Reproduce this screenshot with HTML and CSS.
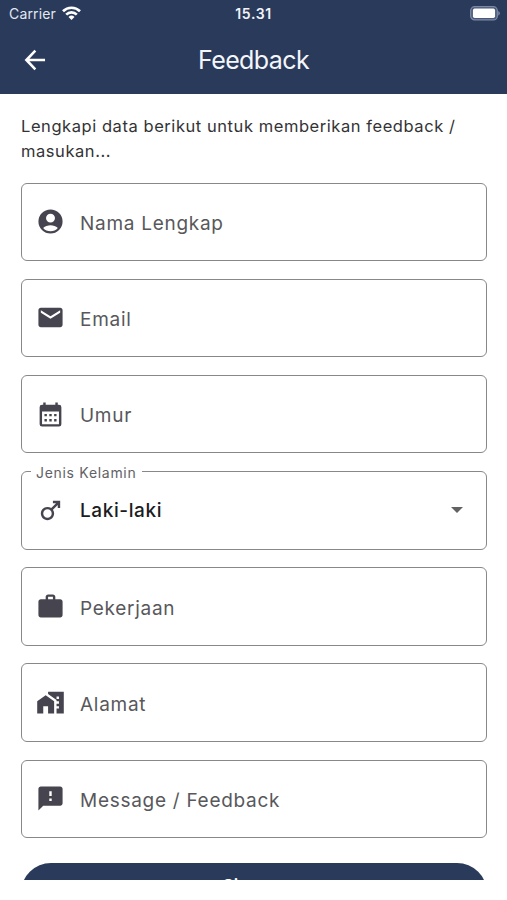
FILE: index.html
```html
<!DOCTYPE html>
<html lang="id">
<head>
<meta charset="utf-8">
<meta name="viewport" content="width=device-width, initial-scale=1">
<title>Feedback</title>
<link rel="stylesheet" href="styles.css">
</head>
<body>
<div class="app">
  <header class="header">
    <div class="status">
      <div class="status-left"><span class="carrier">Carrier</span>
        <svg class="wifi" viewBox="0 0 19 14"><g fill="none" stroke="#fff" stroke-width="2.7"><path d="M1 5.200a12.200 12.200 0 0 1 17 0"/><path d="M4.200 8.600a7.600 7.600 0 0 1 10.600 0"/></g><path d="M9.500 14 6.500 10.900a4.300 4.300 0 0 1 6 0z" fill="#fff"/></svg>
      </div>
      <span class="time">15.31</span>
      <svg class="battery" viewBox="0 0 31 15"><rect x="1.700" y=".7" width="26.600" height="13.200" rx="4" fill="#48577a" stroke="#7d89a4" stroke-width="1.300"/><rect x="3.900" y="2.600" width="22.200" height="9.400" rx="1.800" fill="#fff"/><path d="M29.300 5v4.600c2-.8 2-3.800 0-4.600z" fill="#8490aa"/></svg>
    </div>
    <div class="toolbar">
      <svg class="back" viewBox="0 0 24 24"><path d="M20.600 12H5M12.300 4 4.600 12l7.700 8" fill="none" stroke="#fff" stroke-width="2.200"/></svg>
      <h1 class="title">Feedback</h1>
    </div>
  </header>
  <main class="content">
    <p class="intro">Lengkapi data berikut untuk memberikan feedback / masukan...</p>
    <form class="form">
      <div class="field"><svg class="icon" viewBox="0 0 24 24"><path fill-rule="evenodd" d="M12 2a10 10 0 1 0 0 20 10 10 0 0 0 0-20zm0 3.500a3.700 3.700 0 1 1 0 7.400 3.700 3.700 0 0 1 0-7.400zm0 14.500c-2.400 0-4.600-1-6.100-2.700C7.600 16 9.700 15.200 12 15.200s4.400.8 6.100 2.100A8 8 0 0 1 12 20z"/></svg><span class="label">Nama Lengkap</span></div>
      <div class="field"><svg class="icon" viewBox="0 0 24 24"><path d="M20 4H4c-1.100 0-2 .9-2 2v12c0 1.100.9 2 2 2h16c1.100 0 2-.9 2-2V6c0-1.100-.9-2-2-2zm0 4-8 5-8-5V6l8 5 8-5v2z"/></svg><span class="label">Email</span></div>
      <div class="field"><svg class="icon" viewBox="0 0 24 24"><path fill-rule="evenodd" d="M19 4h-1V2h-2v2H8V2H6v2H5a2 2 0 0 0-2 2v14a2 2 0 0 0 2 2h14a2 2 0 0 0 2-2V6a2 2 0 0 0-2-2zm0 16H5V9.500h14z"/><path d="M7 11.500h2v2H7zm4 0h2v2h-2zm4 0h2v2h-2zm-8 4.300h2v2H7zm4 0h2v2h-2zm4 0h2v2h-2z"/></svg><span class="label">Umur</span></div>
      <div class="field select"><span class="legend">Jenis Kelamin</span><svg class="icon" viewBox="0 0 24 24"><path d="M9.500 11c1.930 0 3.500 1.570 3.500 3.500S11.430 18 9.500 18 6 16.430 6 14.500 7.570 11 9.500 11zm0-2C6.460 9 4 11.460 4 14.500S6.460 20 9.500 20s5.500-2.460 5.500-5.500c0-1.160-.36-2.230-.97-3.120L18 7.420V10h2V4h-6v2h2.580l-3.970 3.970C11.730 9.360 10.660 9 9.500 9z"/></svg><span class="value">Laki-laki</span><svg class="caret" viewBox="0 0 12 6"><path d="M0 0h12L6 6z"/></svg></div>
      <div class="field"><svg class="icon" viewBox="0 0 24 24"><path fill-rule="evenodd" d="M20 6h-4V4c0-1.110-.89-2-2-2h-4c-1.110 0-2 .89-2 2v2H4c-1.110 0-2 .89-2 2v11c0 1.110.89 2 2 2h16c1.110 0 2-.89 2-2V8c0-1.110-.89-2-2-2zm-6 0h-4V4h4v2z"/></svg><span class="label">Pekerjaan</span></div>
      <div class="field"><svg class="icon" viewBox="0 0 24 24"><path d="M1 11v10h5v-6h4v6h5V11L8 6z"/><path fill-rule="evenodd" d="M10 3v1.970l7 5V11h2v2h-2v2h2v2h-2v4h6V3H10zm9 6h-2V7h2v2z"/></svg><span class="label">Alamat</span></div>
      <div class="field"><svg class="icon" viewBox="0 0 24 24"><path fill-rule="evenodd" d="M20 2H4c-1.100 0-2 .9-2 2v18l4-4h14c1.100 0 2-.9 2-2V4c0-1.100-.9-2-2-2zm-7 12h-2v-2h2v2zm0-4h-2V6h2v4z"/></svg><span class="label">Message / Feedback</span></div>
      <button class="submit" type="button">Simpan</button>
    </form>
  </main>
</div>
</body>
</html>
```

FILE: styles.css
```css
* { box-sizing: border-box; }
body { margin: 0; background: #fff; font-family: Inter, "Liberation Sans", sans-serif; }
.app { height: 880px; overflow: hidden; }
.header { height: 93.500px; background: #293a5b; color: #fff; }
.status { height: 27px; display: grid; grid-template-columns: 1fr auto 1fr; align-items: center; padding: 0 7px 0 9px; }
.status-left { display: flex; align-items: center; gap: 6px; }
.carrier { font-size: 14px; letter-spacing: 0.150px; color: #e3e7f0; }
.wifi { width: 19px; height: 14px; margin-top: -1px; }
.time { margin-right: 2px; font-size: 14px; font-weight: 600; letter-spacing: 0.600px; color: #f1f3f8; }
.battery { width: 31px; height: 15px; justify-self: end; }
.toolbar { height: 66px; display: grid; grid-template-columns: 60px 1fr 60px; align-items: center; }
.back { width: 28px; height: 28px; margin-left: 21px; }
.title { margin: 0; text-align: center; font-size: 25px; line-height: 30px; font-weight: 400; letter-spacing: -0.600px; color: #f4f6fa; }
.content { padding: 20.500px 20.500px 0 21px; }
.intro { margin: 0 0 19.500px; font-size: 16.500px; line-height: 24.500px; letter-spacing: 0.560px; color: #333335; }
.form { display: flex; flex-direction: column; gap: 17.700px; }
.field { position: relative; height: 78.500px; flex: none; display: flex; align-items: center; border: 1.500px solid #88888a; border-radius: 6px; padding: 0 23px 0 14px; }
.icon { width: 29px; height: 29px; margin-right: 15px; fill: #46444e; flex: none; }
.label { padding-top: 3px; font-size: 19px; letter-spacing: 0.720px; color: #58585c; }
.value { flex: 1; font-size: 19px; font-weight: 500; letter-spacing: 0.600px; color: #1c1c1e; }
.legend { position: absolute; left: 9px; top: -9px; padding: 0 6px 0 5px; background: #fff; font-size: 14px; line-height: 20px; letter-spacing: 0.700px; color: #626266; }
.caret { width: 12px; height: 6px; fill: #626264; }
.submit { height: 60px; flex: none; display: flex; justify-content: center; align-items: flex-start; margin-top: 7px; padding: 12px 0 0; border: 0; border-radius: 30px; background: #293a5b; color: #fff; font: 500 17.500px/22px Inter, "Liberation Sans", sans-serif; }
```
